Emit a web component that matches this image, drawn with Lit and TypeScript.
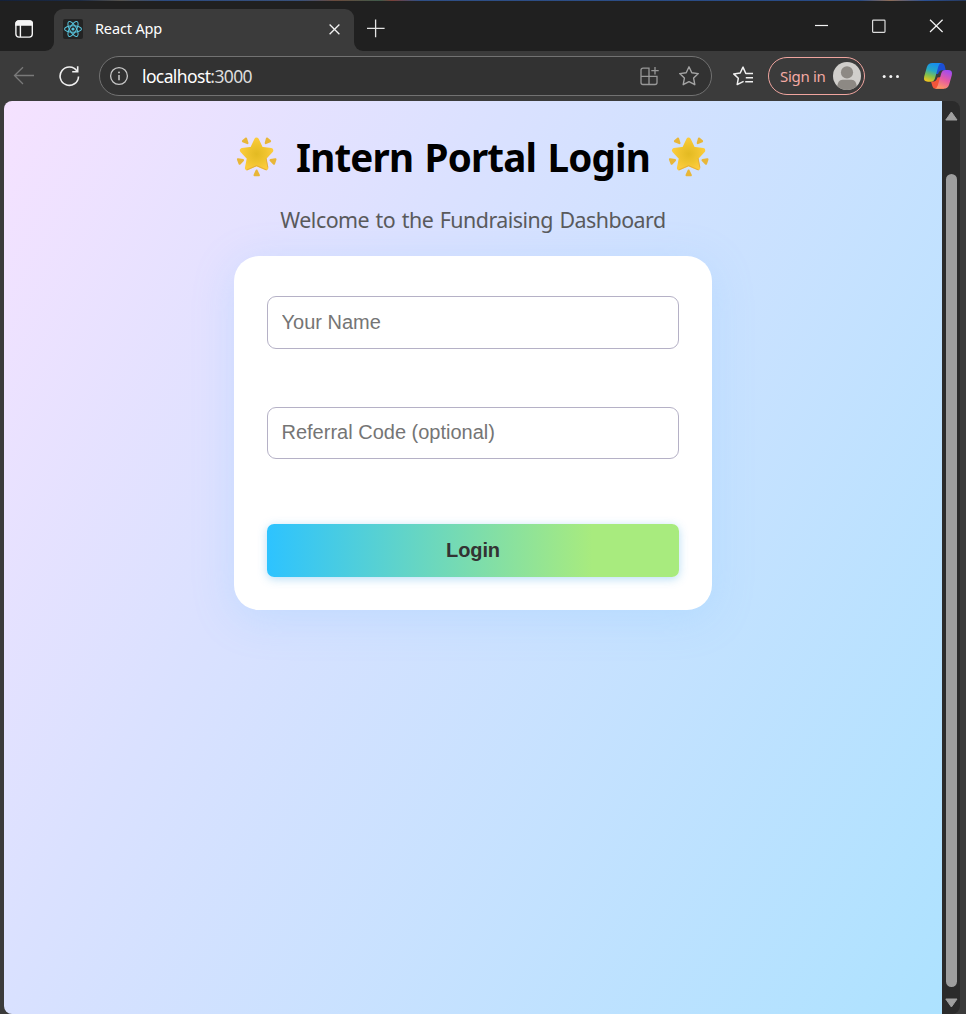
import { LitElement, html, css } from "lit";
import { customElement } from "lit/decorators.js";

@customElement("glow-star")
class GlowStar extends LitElement {
  static styles = css`
    :host { display: block; width: 42px; height: 42px; flex: none; }
    svg { display: block; }
  `;
  render() {
    return html`<svg width="42" height="42" viewBox="0 0 42 42">
      <defs>
        <radialGradient id="body" cx=".5" cy=".5" r=".55">
          <stop offset="0" stop-color="#e3ba22"></stop>
          <stop offset=".6" stop-color="#f0c42f"></stop>
          <stop offset="1" stop-color="#fbcb3b"></stop>
        </radialGradient>
      </defs>
      <g fill="#e8b638" stroke="#e8b638" stroke-width="2.2" stroke-linejoin="round">
        <path d="M10 2.6 L7 5.2 L11.4 7 Z"></path>
        <path d="M31 2.6 L34 5.2 L29.8 7 Z"></path>
        <path d="M2 23.4 L7 24.2 L3.6 27.6 Z"></path>
        <path d="M39.4 23.4 L34.6 24.2 L38 27.6 Z"></path>
        <path d="M20.6 34.6 L22.8 39.2 L18.6 39.2 Z"></path>
      </g>
      <path d="M20.6 3.8 L25 13 L35 14.4 L28 22 L30 32 L20.6 27.8 L11.2 32 L13.2 22 L6.2 14.4 L16.2 13 Z"
        fill="url(#body)" stroke="url(#body)" stroke-width="4.6" stroke-linejoin="round"></path>
      <path d="M11.2 33.8 L20.6 29.6 L30.2 33.8 M31.8 31 L30.2 22.6" fill="none" stroke="#dda23a" stroke-width="1" stroke-linecap="round" opacity=".7"></path>
    </svg>`;
  }
}

@customElement("tab-strip")
class TabStrip extends LitElement {
  static styles = css`
    :host {
      display: flex; height: 51px; box-sizing: border-box; padding-top: 9px;
      background: linear-gradient(90deg, #14213a 0, #1c2b45 80px, #52504c 120px, #2b4a80 165px, #38507a 300px, #6a4a3c 335px, #3f5a4a 380px, #7a4038 392px, #2f4f86 420px, #274a85 860px, #8d6c58 890px, #2a4f92 925px, #26385c) 0 0 / 100% 1px no-repeat, #202020;
      font-family: "Noto Sans", "Open Sans", sans-serif; color: #fff;
    }
    .lead { width: 54px; background: #3b3b3b; height: 42px; flex: none; }
    .lead div { height: 42px; background: #202020; border-bottom-right-radius: 9px; box-sizing: border-box; padding: 11px 0 0 15px; }
    .tab { width: 300px; box-sizing: border-box; height: 42px; background: #3b3b3b; border-radius: 9px 9px 0 0; display: flex; align-items: center; padding: 0 12px 2px 9px; flex: none; }
    .logo { width: 20px; height: 20px; border-radius: 2px; background: #232323; }
    .title { margin: -2px 0 0 12px; font-size: 14.5px; letter-spacing: -0.15px; flex: 1; white-space: nowrap; }
    .rest { flex: 1; background: #3b3b3b; height: 42px; }
    .rest div { height: 42px; background: #202020; border-bottom-left-radius: 9px; display: flex; justify-content: space-between; box-sizing: border-box; padding: 10px 22px 0 12px; }
    svg { display: block; flex: none; }
  `;
  render() {
    return html`
      <div class="lead"><div>
        <svg width="18" height="18" viewBox="0 0 18 18" fill="none" stroke="#f4f4f4" stroke-width="1.4">
          <rect x=".9" y=".9" width="16.4" height="16.2" rx="3"></rect>
          <path d="M5.4 5V17"></path>
          <path d="M1 5V3.6Q1 1 3.6 1H14.6Q17.2 1 17.2 3.6V5Z" fill="#f4f4f4"></path>
        </svg>
      </div></div>
      <div class="tab">
        <svg class="logo" viewBox="0 0 20 20" fill="none" stroke="#58c4dc" stroke-width="1.05">
          <ellipse cx="10" cy="10" rx="8.5" ry="3.3"></ellipse>
          <ellipse cx="10" cy="10" rx="8.5" ry="3.3" transform="rotate(60 10 10)"></ellipse>
          <ellipse cx="10" cy="10" rx="8.5" ry="3.3" transform="rotate(120 10 10)"></ellipse>
          <circle cx="10" cy="10" r="1.6" fill="#58c4dc" stroke="none"></circle>
        </svg>
        <span class="title">React App</span>
        <svg width="14" height="14" viewBox="0 0 14 14" stroke="#f2f2f2" stroke-width="1.3"><path d="M1.6 2.5L11.4 12.3M11.4 2.5L1.6 12.3"></path></svg>
      </div>
      <div class="rest"><div>
        <svg width="20" height="20" viewBox="0 0 20 20" stroke="#e4e4e4" stroke-width="1.3"><path d="M9.6 .5V18.3M1 9.3H18.6"></path></svg>
        <svg width="130" height="16" viewBox="0 0 130 16" fill="none" stroke="#f4f4f4" stroke-width="1.2">
          <path d="M1 6.5H14"></path>
          <rect x="58.6" y="1.1" width="12.4" height="12.2" rx=".8" stroke="#dcdcdc"></rect>
          <path d="M116 .8L128.6 13M128.6 .8L116 13"></path>
        </svg>
      </div></div>
    `;
  }
}

@customElement("address-toolbar")
class AddressToolbar extends LitElement {
  static styles = css`
    :host {
      display: flex; align-items: center; height: 50px; box-sizing: border-box;
      background: #3b3b3b; padding: 0 13px 0 13px; font-family: "Noto Sans", "Open Sans", sans-serif; color: #fff;
    }
    svg { display: block; flex: none; }
    .reload { margin-left: 24px; }
    .address { margin-left: 19px; width: 613px; height: 40px; box-sizing: border-box; border: 1px solid #727272; border-radius: 20px; background: #323232; display: flex; align-items: center; padding: 0 11px 0 9px; flex: none; }
    .url { margin-left: 13px; font-size: 17.5px; letter-spacing: -0.62px; flex: 1; white-space: nowrap; line-height: 24px; margin-top: -1px; }
    .url span { color: #dcdcdc; }
    .grid { margin-right: 19px; }
    .fav { margin-left: 20px; }
    .sign { margin-left: 14px; width: 97px; height: 38px; box-sizing: border-box; border: 1.5px solid #f0a59f; border-radius: 19px; display: flex; align-items: center; justify-content: space-between; padding: 0 3px 0 11px; color: #f3aaa4; font-size: 15px; letter-spacing: -0.3px; white-space: nowrap; flex: none; }
    .dots { margin-left: 17px; }
    .copilot { margin-left: auto; }
  `;
  render() {
    return html`
      <svg width="22" height="20" viewBox="0 0 22 20" fill="none" stroke="#797979" stroke-width="1.3"><path d="M21 9.5H2M10 1.2L1.5 9.5L10 18"></path></svg>
      <svg class="reload" width="21" height="22" viewBox="0 0 21 22" fill="none" stroke="#f0f0f0" stroke-width="1.6"><path d="M18 6.1A9.2 9.2 0 1 0 19.5 11.4"></path><path d="M18.7 1.2V6.8H13.2"></path></svg>
      <div class="address">
        <svg width="20" height="20" viewBox="0 0 20 20" fill="none" stroke="#c8c8c8" stroke-width="1.3"><circle cx="10" cy="10" r="8.4"></circle><path d="M10 9V14.2" stroke-width="1.5"></path><circle cx="10" cy="6.4" r=".95" fill="#c8c8c8" stroke="none"></circle></svg>
        <div class="url">localhost<span>:3000</span></div>
        <svg class="grid" width="19" height="20" viewBox="0 0 19 20" fill="none" stroke="#989898" stroke-width="1.3"><path d="M9 9.8V2.2H3Q1 2.2 1 4.2V16.5Q1 18.5 3 18.5H15Q17 18.5 17 16.5V10.3H1M9 9.8V18.5M15 1V8.4M11.3 4.7H18.7"></path></svg>
        <svg width="22" height="22" viewBox="0 0 22 22" fill="none" stroke="#a4a4a4" stroke-width="1.4" stroke-linejoin="round"><path d="M11 1.8L13.8 7.7L20.3 8.6L15.6 13.1L16.8 19.7L11 16.6L5.2 19.7L6.4 13.1L1.7 8.6L8.2 7.7Z"></path></svg>
      </div>
      <svg class="fav" width="22" height="22" viewBox="0 0 22 22" fill="none" stroke="#f0f0f0" stroke-width="1.5" stroke-linejoin="round"><path d="M21 8.5H13.8L11 2.1L8.2 8L1.7 8.9L6.3 13.3L5.2 19.6L11.6 16.4M13.8 12.7H21M13.2 16.7H21"></path></svg>
      <div class="sign"><span>Sign in</span>
        <svg width="28" height="28" viewBox="0 0 28 28"><defs><clipPath id="c"><circle cx="14" cy="14" r="14"></circle></clipPath></defs><circle cx="14" cy="14" r="14" fill="#d0cecb"></circle><g clip-path="url(#c)" fill="#8d8984"><circle cx="14" cy="10.4" r="6.1"></circle><path d="M4 26Q4.5 17.8 9.5 17.8H18.5Q23.5 17.8 24 26L14 29Z"></path></g></svg>
      </div>
      <svg class="dots" width="18" height="6" viewBox="0 0 18 6" fill="#f4f4f4"><circle cx="2.2" cy="3.6" r="1.5"></circle><circle cx="8.8" cy="3.6" r="1.5"></circle><circle cx="15.5" cy="3.6" r="1.5"></circle></svg>
      <svg class="copilot" width="30" height="28" viewBox="0 0 30 28">
        <defs>
          <linearGradient id="a" x1=".6" y1="0" x2=".3" y2="1"><stop offset="0" stop-color="#168df0"></stop><stop offset=".4" stop-color="#27a9c4"></stop><stop offset=".7" stop-color="#86c04a"></stop><stop offset="1" stop-color="#f0c51f"></stop></linearGradient>
          <linearGradient id="b" x1=".7" y1="0" x2=".3" y2="1"><stop offset="0" stop-color="#a04cf2"></stop><stop offset=".5" stop-color="#e65aa2"></stop><stop offset="1" stop-color="#ff9a62"></stop></linearGradient>
        </defs>
        <path d="M9 1H18.6Q20.8 1 21.6 3.6L22.8 8.2H19Q16.2 8.2 15 12L12 12Z" fill="#1c4fd6"></path>
        <path d="M21 26.8H12.6Q10.2 26.8 9.4 24.2L8 19.4H10.4Q13.4 19.2 14.4 15.4L18 15Z" fill="#f2553a"></path>
        <path d="M9.4 1H18.4Q16.2 1.6 15.4 4.2L12 16.2Q11 19.8 7.6 19.8H5Q0 19.8 1.2 14.6L3.9 5Q5.2 1 9.4 1Z" fill="url(#a)"></path>
        <path d="M20.6 26.8H11.8Q14 26.2 14.8 23.6L18.2 11.4Q19.2 8 22.4 8H25Q30 8 28.8 13.2L26.1 22.8Q24.8 26.8 20.6 26.8Z" fill="url(#b)"></path>
      </svg>
    `;
  }
}

@customElement("login-page")
class LoginPage extends LitElement {
  static styles = css`
    :host {
      display: flex; flex-direction: column; align-items: center; flex: 1; box-sizing: border-box;
      background: linear-gradient(120deg, #f7e2ff 0%, #dae1ff 36%, #ade2ff 100%) 0 100% / 100% 970px no-repeat;
      border-radius: 8px 0 0 8px; padding-top: 32px;
    }
    .heading { display: flex; align-items: flex-start; justify-content: space-between; width: 474px; height: 48px; padding-top: 3px; box-sizing: border-box; }
    h1 { margin: -3px 0 0; font: 700 38.6px/48px "Noto Sans", "Open Sans", sans-serif; letter-spacing: -0.85px; word-spacing: 2.2px; color: #000; white-space: nowrap; }
    .welcome { margin: 24px 0 0; font: 400 21.4px/30px "Noto Sans", "Open Sans", sans-serif; letter-spacing: -0.5px; word-spacing: 1.4px; color: #5a5a5c; white-space: nowrap; }
    form { margin: 21px 0 0; width: 478px; height: 354px; box-sizing: border-box; background: #fff; border-radius: 25px; padding: 40px 33px 0; display: flex; flex-direction: column; box-shadow: 0 8px 40px rgba(130, 200, 255, .25); }
    input { height: 53px; flex: none; box-sizing: border-box; border: 1px solid #b5b1c6; border-radius: 9px; background: #fff; padding: 0 14px 1px 13.5px; font: 20px "Liberation Sans", Arial, sans-serif; margin: 0 0 58px; width: 100%; }
    input.code { height: 52px; margin-bottom: 65px; padding-bottom: 2px; }
    input::placeholder { color: #757575; opacity: 1; }
    button { height: 53px; border: 0; border-radius: 7px; padding: 0 0 1px; background: linear-gradient(90deg, #2dc3ff, #a8eb7e 79%); font: 700 20px "Liberation Sans", Arial, sans-serif; color: #333; box-shadow: 0 2px 10px rgba(65, 165, 230, .38); letter-spacing: -.1px; }
  `;
  render() {
    return html`
      <div class="heading"><glow-star></glow-star><h1>Intern Portal Login</h1><glow-star></glow-star></div>
      <p class="welcome">Welcome to the Fundraising Dashboard</p>
      <form>
        <input placeholder="Your Name" />
        <input class="code" placeholder="Referral Code (optional)" />
        <button type="button">Login</button>
      </form>
    `;
  }
}

@customElement("app-root")
class AppRoot extends LitElement {
  static styles = css`
    :host { display: flex; flex-direction: column; width: 966px; height: 1014px; background: #3b3b3b; overflow: hidden; }
    .view { display: flex; flex: 1; padding: 0 6px 0 4px; }
    .scroll { width: 18px; background: #2b2b2b; border-radius: 0 8px 8px 0; display: flex; flex-direction: column; align-items: center; padding: 10px 0 6px; box-sizing: border-box; }
    .thumb { flex: 1; width: 11px; border-radius: 6px; background: #9e9e9e; margin: 53px 0 11px; }
    svg { display: block; }
  `;
  render() {
    return html`
      <tab-strip></tab-strip>
      <address-toolbar></address-toolbar>
      <div class="view">
        <login-page></login-page>
        <div class="scroll">
          <svg width="14" height="10" viewBox="0 0 14 10" fill="#a0a0a0" stroke="#a0a0a0" stroke-linejoin="round"><path d="M7.4 1L13 9H1.8Z"></path></svg>
          <div class="thumb"></div>
          <svg width="14" height="10" viewBox="0 0 14 10" fill="#a0a0a0" stroke="#a0a0a0" stroke-linejoin="round"><path d="M7.4 9L13 1H1.8Z"></path></svg>
        </div>
      </div>
    `;
  }
}
